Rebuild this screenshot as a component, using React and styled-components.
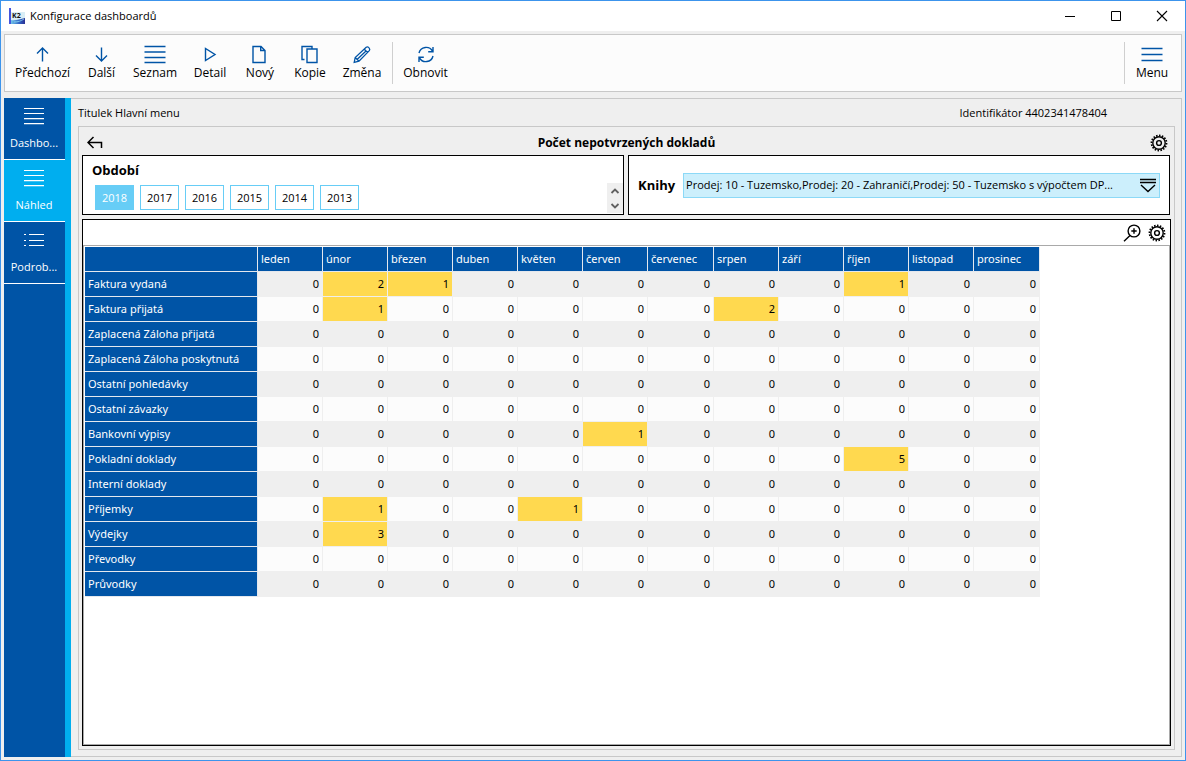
import React, { useState } from "react";
import styled, { createGlobalStyle, css } from "styled-components";

const BLUE = "#0054a6";
const CYAN = "#00aeef";
const SKY = "#67cdf6";

const GlobalStyle = createGlobalStyle`
  * { box-sizing: border-box; }
  body {
    margin: 0;
    font-family: "Open Sans", "Noto Sans", sans-serif;
    font-size: 12px;
    line-height: 16px;
    color: #000;
  }
  button, select { font: inherit; color: inherit; }
`;

const Window = styled.div`
  display: flex;
  flex-direction: column;
  min-height: 100vh;
  border: 1px solid #3c94ec;
  background: #efefef;
`;

const TitleBar = styled.header`
  display: flex;
  align-items: center;
  gap: 5px;
  height: 30px;
  padding-left: 8px;
  background: #fff;
`;

const WindowTitle = styled.h1`
  flex: 1;
  margin: 0;
  font-size: 11px;
  font-weight: 400;
`;

const WindowButtons = styled.div`
  display: flex;
`;

const PlainButton = styled.button`
  display: flex;
  align-items: center;
  justify-content: center;
  padding: 0;
  border: 0;
  background: none;
`;

const WindowButton = styled(PlainButton)`
  width: 46px;
  height: 30px;
`;

const Toolbar = styled.nav`
  display: flex;
  align-items: center;
  height: 58px;
  margin: 3px 3px 6px;
  padding: 0 2px;
  border: 1px solid #c8c8c8;
  background: #fcfcfc;
`;

const ToolButton = styled(PlainButton)`
  flex-direction: column;
  gap: 1px;
  width: ${(p) => p.$width}px;
  height: 42px;
  padding-bottom: 3px;
  white-space: nowrap;
  svg { color: ${BLUE}; }
`;

const ToolGroup = styled.div`
  display: flex;
  padding-right: 3px;
`;

const Divider = styled.span`
  width: 1px;
  height: 42px;
  background: #cfcfcf;
`;

const Spacer = styled.span`
  flex: 1;
`;

const Body = styled.div`
  display: flex;
  flex: 1;
  padding: 0 3px 3px;
`;

const Sidebar = styled.nav`
  display: flex;
  flex-direction: column;
  width: 67px;
  border-right: 6px solid ${CYAN};
  background: ${BLUE};
`;

const SideItem = styled(PlainButton)`
  flex-direction: column;
  gap: 10px;
  height: 62px;
  padding-right: 1px;
  border-bottom: 1px solid #fff;
  background: ${(p) => (p.$active ? CYAN : BLUE)};
  color: #fff;
  font-size: 11px;
`;

const Main = styled.main`
  display: flex;
  flex: 1;
  flex-direction: column;
  min-width: 0;
  padding: 0 6px 6px 7px;
  border: 1px solid #c8c8c8;
  border-left: 0;
`;

const MainHeader = styled.div`
  display: flex;
  align-items: center;
  justify-content: space-between;
  height: 27px;
  padding-right: 68px;
  font-size: 11px;
`;

const Dashboard = styled.section`
  display: flex;
  flex: 1;
  flex-direction: column;
  padding: 0 3px 3px;
  border: 1px solid #c8c8c8;
`;

const DashboardHeader = styled.div`
  display: flex;
  align-items: center;
  justify-content: space-between;
  height: 28px;
  padding: 4px 3px 0 5px;
`;

const DashboardTitle = styled.h2`
  margin: 0;
  font-size: 12px;
  font-weight: 700;
`;

const Filters = styled.div`
  display: grid;
  grid-template-columns: 1fr 1fr;
  gap: 4px;
  margin-right: 1px;
`;

const FilterBox = styled.div`
  display: flex;
  height: 60px;
  border: 1px solid #000;
  background: #fff;
`;

const Period = styled.fieldset`
  flex: 1;
  margin: 0;
  padding: 0 9px;
  border: 0;
`;

const FilterLabel = styled.label`
  font-size: 13px;
  font-weight: 700;
`;

const PeriodLabel = styled.legend`
  padding: 6px 0 0;
  font-size: 13px;
  font-weight: 700;
`;

const Years = styled.div`
  display: flex;
  gap: 6px;
  padding: 7px 3px 0;
`;

const YearButton = styled(PlainButton)`
  width: 39px;
  height: 25px;
  border: 1px solid ${SKY};
  font-size: 11px;
  ${(p) => p.$active && css`
    background: ${SKY};
    color: #fff;
  `}
`;

const Stepper = styled.div`
  display: flex;
  flex-direction: column;
  align-self: flex-end;
  width: 16px;
  margin-bottom: 1px;
  background: #efefef;
  button { height: 15px; }
`;

const Books = styled.div`
  display: flex;
  flex: 1;
  align-items: center;
  gap: 8px;
  min-width: 0;
  padding: 0 9px;
`;

const SelectWrap = styled.div`
  position: relative;
  flex: 1;
  min-width: 0;
  svg {
    position: absolute;
    top: 5px;
    right: 3px;
    pointer-events: none;
  }
`;

const Select = styled.select`
  display: block;
  width: 100%;
  height: 25px;
  padding: 0 24px 0 2px;
  border: 1px solid #8cd9f7;
  border-radius: 0;
  background: #cceffc;
  font-size: 11px;
  appearance: none;
  text-overflow: ellipsis;
`;

const Report = styled.section`
  display: flex;
  flex: 1;
  flex-direction: column;
  margin-top: 4px;
  border: 1px solid #000;
  background: #fff;
`;

const ReportBar = styled.div`
  display: flex;
  align-items: center;
  justify-content: flex-end;
  gap: 7px;
  height: 25px;
  padding-right: 4px;
`;

const Grid = styled.div`
  flex: 1;
  padding: 1px;
  border: 1px solid #a9a9a9;
`;

const Table = styled.table`
  table-layout: fixed;
  width: 955px;
  border-spacing: 0;
  font-family: "Noto Sans", "Open Sans", sans-serif;
  font-size: 11px;
  th, td {
    height: 25px;
    padding: 0 3px;
    border-right: 1px solid #e4e8ee;
    border-bottom: 1px solid #e4e8ee;
  }
  th {
    background: ${BLUE};
    background-clip: padding-box;
    color: #fff;
    font-weight: 400;
    text-align: left;
    white-space: nowrap;
  }
  tbody tr { background: #fcfcfc; }
  tbody tr:nth-child(odd) { background: #efefef; }
`;

const Value = styled.td`
  && { border-color: #efefef; }
  text-align: right;
  ${(p) => p.$marked && css`background: #ffd94f; background-clip: padding-box;`}
`;

const Svg = ({ w = 22, h = 22, sw = 1.4, children }) => (
  <svg width={w} height={h} viewBox={`0 0 ${w} ${h}`} fill="none" stroke="currentColor" strokeWidth={sw} aria-hidden="true">
    {children}
  </svg>
);

const Logo = () => (
  <svg width="16" height="16" viewBox="0 0 16 16" aria-hidden="true">
    <defs>
      <linearGradient id="wave" x1="0" x2="1">
        <stop offset="0" stopColor="#6fc4ea" />
        <stop offset="0.6" stopColor="#2f62c4" />
        <stop offset="1" stopColor="#2b2f92" />
      </linearGradient>
    </defs>
    <rect x="2" y="4" width="14" height="9" fill="#d9edf5" />
    <path d="M2 16V12c4 1 9-1 14-2v6z" fill="url(#wave)" />
    <path d="M5 14c4 0 7-1 10-3" stroke="#8fd8f2" strokeWidth="0.8" fill="none" />
    <rect width="2" height="16" fill="#4455dd" />
    <text x="3" y="10" fontSize="7" fontWeight="700" fontFamily="Open Sans, sans-serif" fill="#111">K2</text>
  </svg>
);

const UpIcon = () => <Svg><path d="M10.500 19.500V6M5 11.500L10.500 6l5.500 5.500" /></Svg>;
const DownIcon = () => <Svg><path d="M10.500 5.500V19M5 13.500L10.500 19l5.500-5.500" /></Svg>;
const ListIcon = () => <Svg sw={1.3}><path d="M.5 4.500h21M.5 10h21M.5 15.500h21M.5 20.500h21" /></Svg>;
const PlayIcon = () => <Svg><path d="M6.500 6.500v12L16 12.500z" /></Svg>;
const PageIcon = () => <Svg><path d="M4 4.500h8l4 4V20.500H4zM11.700 4.500v4H16" /></Svg>;
const CopyIcon = () => <Svg><path d="M8 7h10v13.500H8zM5.500 17.500H3V4.500h10V7" /></Svg>;
const PencilIcon = () => (
  <Svg sw={1.3}><path d="M3.200 20.300l1-4.800L15.200 5.300q1.300-1 2.400.1l.6.700q1.100 1.200.1 2.500L8 19.200zM4.200 15.500l3.800 3.700M13.300 7.200l3.500 3.500M6.300 17.300l9-8.600" /></Svg>
);
const RefreshIcon = () => (
  <Svg><path d="M4 11a7.300 7.300 0 0 1 13.500-1.800M18 5v4.700h-4.800M18 14a7.300 7.300 0 0 1-13.500 1.800M4 20v-4.700h4.800" /></Svg>
);
const MenuIcon = () => <Svg><path d="M.5 6.500h21M.5 12.500h21M.5 18.500h21" /></Svg>;
const LinesIcon = () => <Svg w={20} h={18} sw={1.2}><path d="M0 1.500h20M0 6.500h20M0 11.700h20M0 16.700h20" /></Svg>;
const BulletsIcon = () => (
  <Svg w={20} h={18} sw={1.2}><path d="M5 3.500h15M5 9.500h15M5 14.500h15M0 3.500h2M0 9.500h2M0 14.500h2" /></Svg>
);
const BackIcon = () => <Svg w={16} h={14} sw={1.5}><path d="M6.500 1L1 6.500 6.500 12M1 6.500h13.500V12" /></Svg>;
const GearIcon = () => (
  <Svg w={18} h={18} sw={1.4}>
    <circle cx="9" cy="9" r="6.200" />
    <circle cx="9" cy="9" r="2.400" />
    <circle cx="9" cy="9" r="7.500" strokeWidth="1.800" strokeDasharray="1.500 1.427" />
  </Svg>
);
const ZoomIcon = () => (
  <Svg w={18} h={18}><circle cx="11" cy="7" r="5.900" /><path d="M7 11.500L1 17.300M8.300 7h5.400M11 4.300v5.400" /></Svg>
);
const DropIcon = () => <Svg w={18} h={15} sw={1.4}><path d="M1 1.500h16M1 4.500h16M2 7l7 6.500L16 7" /></Svg>;
const CaretIcon = ({ down }) => (
  <Svg w={10} h={8} sw={1.8}><path d={down ? "M1.500 2L5 5.500 8.500 2" : "M1.500 6L5 2.500 8.500 6"} stroke="#606060" /></Svg>
);

const TOOLS = [
  ["Předchozí", UpIcon, 71],
  ["Další", DownIcon, 47],
  ["Seznam", ListIcon, 60],
  ["Detail", PlayIcon, 50],
  ["Nový", PageIcon, 50],
  ["Kopie", CopyIcon, 50],
  ["Změna", PencilIcon, 54],
];

const SIDE = [
  ["Dashbo...", LinesIcon],
  ["Náhled", LinesIcon],
  ["Podrob...", BulletsIcon],
];

const YEARS = [2018, 2017, 2016, 2015, 2014, 2013];

const MONTHS = ["leden", "únor", "březen", "duben", "květen", "červen", "červenec", "srpen", "září", "říjen", "listopad", "prosinec"];

const ROWS = [
  ["Faktura vydaná", { 1: 2, 2: 1, 9: 1 }],
  ["Faktura přijatá", { 1: 1, 7: 2 }],
  ["Zaplacená Záloha přijatá", {}],
  ["Zaplacená Záloha poskytnutá", {}],
  ["Ostatní pohledávky", {}],
  ["Ostatní závazky", {}],
  ["Bankovní výpisy", { 5: 1 }],
  ["Pokladní doklady", { 9: 5 }],
  ["Interní doklady", {}],
  ["Příjemky", { 1: 1, 4: 1 }],
  ["Výdejky", { 1: 3 }],
  ["Převodky", {}],
  ["Průvodky", {}],
];

export default function App() {
  const [year, setYear] = useState(2018);
  const [view, setView] = useState(1);

  return (
    <>
      <GlobalStyle />
      <Window>
        <TitleBar>
          <Logo />
          <WindowTitle>Konfigurace dashboardů</WindowTitle>
          <WindowButtons>
            <WindowButton aria-label="Minimalizovat"><Svg w={12} h={12} sw={1}><path d="M1 6.500h10" /></Svg></WindowButton>
            <WindowButton aria-label="Maximalizovat"><Svg w={12} h={12} sw={1}><path d="M1.500 1.500h9v9h-9z" /></Svg></WindowButton>
            <WindowButton aria-label="Zavřít"><Svg w={12} h={12} sw={1.1}><path d="M1 1l10 10M11 1L1 11" /></Svg></WindowButton>
          </WindowButtons>
        </TitleBar>

        <Toolbar>
          <ToolGroup>
            {TOOLS.map(([label, Icon, width]) => (
              <ToolButton key={label} $width={width}><Icon />{label}</ToolButton>
            ))}
          </ToolGroup>
          <Divider />
          <ToolButton $width={65}><RefreshIcon />Obnovit</ToolButton>
          <Spacer />
          <Divider />
          <ToolButton $width={54}><MenuIcon />Menu</ToolButton>
        </Toolbar>

        <Body>
          <Sidebar>
            {SIDE.map(([label, Icon], i) => (
              <SideItem key={label} $active={i === view} onClick={() => setView(i)}><Icon />{label}</SideItem>
            ))}
          </Sidebar>

          <Main>
            <MainHeader>
              <span>Titulek Hlavní menu</span>
              <span>Identifikátor 4402341478404</span>
            </MainHeader>

            <Dashboard>
              <DashboardHeader>
                <PlainButton aria-label="Zpět"><BackIcon /></PlainButton>
                <DashboardTitle>Počet nepotvrzených dokladů</DashboardTitle>
                <PlainButton aria-label="Nastavení"><GearIcon /></PlainButton>
              </DashboardHeader>

              <Filters>
                <FilterBox>
                  <Period>
                    <PeriodLabel>Období</PeriodLabel>
                    <Years>
                      {YEARS.map((y) => (
                        <YearButton key={y} $active={y === year} onClick={() => setYear(y)}>{y}</YearButton>
                      ))}
                    </Years>
                  </Period>
                  <Stepper>
                    <PlainButton aria-label="Nahoru"><CaretIcon /></PlainButton>
                    <PlainButton aria-label="Dolů"><CaretIcon down /></PlainButton>
                  </Stepper>
                </FilterBox>
                <FilterBox>
                  <Books>
                    <FilterLabel htmlFor="books">Knihy</FilterLabel>
                    <SelectWrap>
                      <Select id="books">
                        <option>Prodej: 10 - Tuzemsko,Prodej: 20 - Zahraničí,Prodej: 50 - Tuzemsko s výpočtem DP...</option>
                      </Select>
                      <DropIcon />
                    </SelectWrap>
                  </Books>
                </FilterBox>
              </Filters>

              <Report>
                <ReportBar>
                  <PlainButton aria-label="Přiblížit"><ZoomIcon /></PlainButton>
                  <PlainButton aria-label="Nastavení přehledu"><GearIcon /></PlainButton>
                </ReportBar>
                <Grid>
                  <Table>
                    <colgroup>
                      <col width="173" />
                      {MONTHS.map((m, i) => <col key={m} width={i === 6 || i === 11 ? 66 : 65} />)}
                    </colgroup>
                    <thead>
                      <tr>
                        <th aria-label="Doklad" />
                        {MONTHS.map((m) => <th key={m} scope="col">{m}</th>)}
                      </tr>
                    </thead>
                    <tbody>
                      {ROWS.map(([name, values]) => (
                        <tr key={name}>
                          <th scope="row">{name}</th>
                          {MONTHS.map((m, i) => (
                            <Value key={m} $marked={i in values}>{values[i] ?? 0}</Value>
                          ))}
                        </tr>
                      ))}
                    </tbody>
                  </Table>
                </Grid>
              </Report>
            </Dashboard>
          </Main>
        </Body>
      </Window>
    </>
  );
}
